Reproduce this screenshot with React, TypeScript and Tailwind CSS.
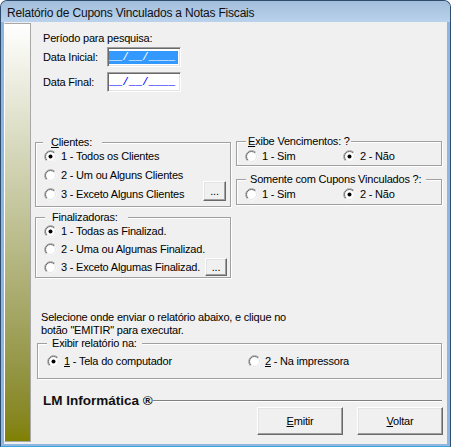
import React from "react";

const ETCH = "border border-[#a0a0a0] shadow-[inset_1px_1px_0_#fff,1px_1px_0_#fff]";
const RAISED =
  "bg-[#f0f0f0] border border-t-white border-l-white border-r-[#696969] border-b-[#696969] shadow-[inset_-1px_-1px_0_#a0a0a0,inset_1px_1px_0_#e3e3e3]";
const SUNKEN =
  "bg-white border border-t-[#a0a0a0] border-l-[#a0a0a0] border-r-white border-b-white shadow-[inset_1px_1px_0_#696969,inset_-1px_-1px_0_#e3e3e3]";

function Radio({ on }: { on?: boolean }) {
  return (
    <svg width="13" height="13" viewBox="0 0 13 13" className="flex-none">
      <circle cx="6.5" cy="6.5" r="6" fill="#fff" />
      <path d="M2.26 10.74A6 6 0 0 1 10.74 2.26" fill="none" stroke="#a0a0a0" />
      <path d="M2.96 10.04A5 5 0 0 1 10.04 2.96" fill="none" stroke="#696969" />
      <path d="M10.04 2.96A5 5 0 0 1 2.96 10.04" fill="none" stroke="#e3e3e3" />
      {on && <circle cx="6.5" cy="6.5" r="2" fill="#000" />}
    </svg>
  );
}

function Option({ on, children, className = "" }: { on?: boolean; children: React.ReactNode; className?: string }) {
  return (
    <div className={`flex items-center gap-[4px] whitespace-nowrap ${className}`}>
      <Radio on={on} />
      <span>{children}</span>
    </div>
  );
}

function Group({ legend, legendClass, className, children }: {
  legend: React.ReactNode; legendClass: string; className: string; children: React.ReactNode;
}) {
  return (
    <div className={`relative ${ETCH} ${className}`}>
      <span className={`absolute -top-[7px] leading-[13px] bg-[#f0f0f0] whitespace-nowrap ${legendClass}`}>{legend}</span>
      {children}
    </div>
  );
}

function DateBox({ selected }: { selected?: boolean }) {
  return (
    <div className={`w-[74px] h-[20px] flex items-center pl-[1px] ${SUNKEN}`}>
      <span
        className={`h-[13px] leading-[13px] w-[69px] font-['Liberation_Mono',monospace] text-[11px] tracking-normal ${
          selected ? "bg-[#3399ff] text-white" : "text-[#0000ff]"
        }`}
      >
        __/__/____
      </span>
    </div>
  );
}

export default function App() {
  return (
    <div className="w-[451px] h-[447px] flex flex-col bg-[#8fb6df] border border-[#2e4d6e] border-b-[#3aa6dc] rounded-t-[7px] overflow-hidden font-['Liberation_Sans',Arial,sans-serif] text-[11px] tracking-[-0.2px] text-black">
      <div className="h-[21px] flex-none flex items-center pt-[2px] pl-[6px] bg-gradient-to-b from-[#a2bedc] to-[#bad2eb] text-[12px] tracking-[-0.2px] text-[#111]">
        Relatório de Cupons Vinculados a Notas Fiscais
      </div>

      <div className="flex-1 flex mx-[3px] mb-[2px] bg-[#f0f0f0]">
        <div className="w-[27px] flex-none mt-[1px] mb-[2px] border border-[#a8a8a8] border-l-white bg-gradient-to-b from-white to-[#808000]" />

        <div className="w-[416px] flex-none flex flex-col">
          <div className="pl-[12px] pt-[10px] leading-[13px]">Período para pesquisa:</div>
          <div className="pl-[12px] mt-[2px] flex items-center h-[20px]">
            <span className="w-[64px]">Data Inicial:</span>
            <DateBox selected />
          </div>
          <div className="pl-[12px] mt-[5px] flex items-center h-[20px]">
            <span className="w-[64px]">Data Final:</span>
            <DateBox />
          </div>

          <div className="mt-[49px] ml-[4px] flex items-start gap-[5px]">
            <div className="w-[196px] flex-none flex flex-col pt-[1px] gap-[10px]">
              <Group
                legend={<><u>C</u>lientes:</>}
                legendClass="left-[7px] pl-[8px] pr-[10px]"
                className="h-[65px] flex"
              >
                <div className="flex flex-col pt-[4px] pl-[8px]">
                  <Option on className="h-[19px]">1 - Todos os Clientes</Option>
                  <Option className="h-[19px]">2 - Um ou Alguns Clientes</Option>
                  <Option className="h-[19px]">3 - Exceto Alguns Clientes</Option>
                </div>
                <button className={`flex-none ml-auto self-end mb-[5px] mr-[4px] w-[23px] h-[20px] leading-[14px] ${RAISED}`}>...</button>
              </Group>
              <Group
                legend="Finalizadoras:"
                legendClass="left-[9px] pl-[7px] pr-[10px]"
                className="h-[61px] flex"
              >
                <div className="flex flex-col pt-[4px] pl-[8px]">
                  <Option on className="h-[18px]">1 - Todas as Finalizad.</Option>
                  <Option className="h-[18px]">2 - Uma ou Algumas Finalizad.</Option>
                  <Option className="h-[18px]">3 - Exceto Algumas Finalizad.</Option>
                </div>
                <button className={`flex-none ml-auto self-end mb-[1px] mr-[4px] w-[22px] h-[18px] leading-[12px] ${RAISED}`}>...</button>
              </Group>
            </div>

            <div className="w-[206px] flex-none flex flex-col gap-[13px]">
              <Group
                legend={<><u>E</u>xibe Vencimentos: ?</>}
                legendClass="left-[9px] pl-[2px] pr-[1px]"
                className="h-[25px] flex pt-[6px] pl-[8px]"
              >
                <Option className="h-[17px] w-[98px]">1 - Sim</Option>
                <Option on className="h-[17px]">2 - Não</Option>
              </Group>
              <Group
                legend="Somente com Cupons Vinculados ?:"
                legendClass="left-[9px] pl-[4px] pr-[5px]"
                className="h-[26px] flex pt-[6px] pl-[8px]"
              >
                <Option className="h-[17px] w-[98px]">1 - Sim</Option>
                <Option on className="h-[17px]">2 - Não</Option>
              </Group>
            </div>
          </div>

          <p className="mt-[33px] pl-[10px] leading-[13px]">
            Selecione onde enviar o relatório abaixo, e clique no
            <br />
            botão "EMITIR" para executar.
          </p>

          <Group
            legend="Exibir relatório na:"
            legendClass="left-[9px] pl-[5px] pr-[5px]"
            className="mt-[6px] ml-[6px] w-[405px] h-[36px] flex pt-[9px] pl-[9px]"
          >
            <Option on className="h-[17px] w-[201px]"><u>1</u> - Tela do computador</Option>
            <Option className="h-[17px]"><u>2</u> - Na impressora</Option>
          </Group>

          <div className="mt-[16px] h-[12px] flex items-center pl-[12px]">
            <span className="w-[110px] flex-none whitespace-nowrap font-bold text-[13.5px] tracking-normal leading-[12px] text-[#111]">LM Informática ®</span>
            <div className="w-[289px] h-[2px] flex-none border-t border-[#808080] border-b border-b-white" />
          </div>

          <div className="flex justify-end gap-[14px] pr-[4px]">
            <button className={`w-[86px] h-[28px] ${RAISED}`}><u>E</u>mitir</button>
            <button className={`w-[86px] h-[28px] ${RAISED}`}><u>V</u>oltar</button>
          </div>
        </div>
      </div>
    </div>
  );
}
